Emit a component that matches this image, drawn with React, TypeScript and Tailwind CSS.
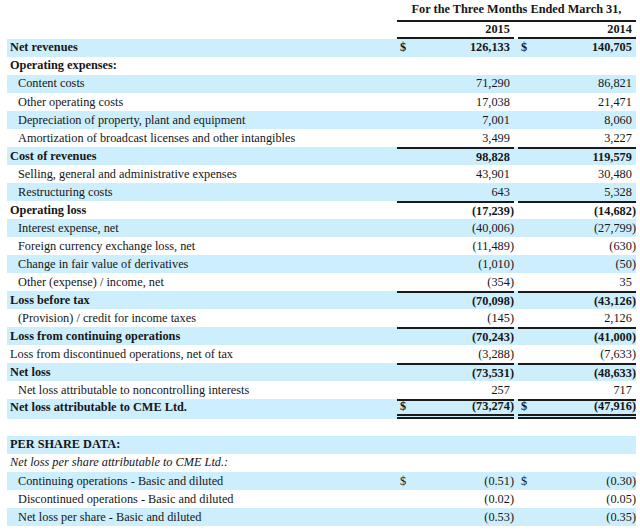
type Row = {
  label: string;
  a?: string;
  b?: string;
  dollar?: boolean;
  bold?: boolean;
  indent?: boolean;
  italic?: boolean;
  lineTop?: boolean;
  doubleBottom?: boolean;
  h?: string;
};

const rows: Row[] = [
  { label: "Net revenues", a: "126,133", b: "140,705", dollar: true, bold: true },
  { label: "Operating expenses:", bold: true },
  { label: "Content costs", a: "71,290", b: "86,821", indent: true },
  { label: "Other operating costs", a: "17,038", b: "21,471", indent: true },
  { label: "Depreciation of property, plant and equipment", a: "7,001", b: "8,060", indent: true },
  { label: "Amortization of broadcast licenses and other intangibles", a: "3,499", b: "3,227", indent: true },
  { label: "Cost of revenues", a: "98,828", b: "119,579", bold: true, lineTop: true },
  { label: "Selling, general and administrative expenses", a: "43,901", b: "30,480", indent: true },
  { label: "Restructuring costs", a: "643", b: "5,328", indent: true },
  { label: "Operating loss", a: "(17,239)", b: "(14,682)", bold: true, lineTop: true },
  { label: "Interest expense, net", a: "(40,006)", b: "(27,799)", indent: true },
  { label: "Foreign currency exchange loss, net", a: "(11,489)", b: "(630)", indent: true },
  { label: "Change in fair value of derivatives", a: "(1,010)", b: "(50)", indent: true },
  { label: "Other (expense) / income, net", a: "(354)", b: "35", indent: true },
  { label: "Loss before tax", a: "(70,098)", b: "(43,126)", bold: true, lineTop: true },
  { label: "(Provision) / credit for income taxes", a: "(145)", b: "2,126", indent: true },
  { label: "Loss from continuing operations", a: "(70,243)", b: "(41,000)", bold: true, lineTop: true },
  { label: "Loss from discontinued operations, net of tax", a: "(3,288)", b: "(7,633)" },
  { label: "Net loss", a: "(73,531)", b: "(48,633)", bold: true, lineTop: true },
  { label: "Net loss attributable to noncontrolling interests", a: "257", b: "717", indent: true },
  { label: "Net loss attributable to CME Ltd.", a: "(73,274)", b: "(47,916)", dollar: true, bold: true, lineTop: true, doubleBottom: true, h: "h-[20px]" },
  { label: "", h: "h-[16.1px]" },
  { label: "PER SHARE DATA:", bold: true },
  { label: "Net loss per share attributable to CME Ltd.:", italic: true },
  { label: "Continuing operations - Basic and diluted", a: "(0.51)", b: "(0.30)", dollar: true, indent: true },
  { label: "Discontinued operations - Basic and diluted", a: "(0.02)", b: "(0.05)", indent: true },
  { label: "Net loss per share - Basic and diluted", a: "(0.53)", b: "(0.35)", indent: true },
];

function Num({ v }: { v: string }) {
  const neg = v.endsWith(")");
  return (
    <span>
      {v}
      {!neg && <span className="invisible">)</span>}
    </span>
  );
}

function Cell({ row, v, w }: { row: Row; v?: string; w: string }) {
  const lines = [
    row.lineTop ? "border-t-2 border-[#1a1a1a]" : "",
    row.doubleBottom ? "border-b-[5px] border-double border-b-[#1a1a1a] items-start leading-[11px]" : "items-center",
  ].join(" ");
  return (
    <div className={`${w} h-full flex justify-between pl-[3px] ${lines}`}>
      <span>{row.dollar ? "$" : ""}</span>
      {v && <Num v={v} />}
    </div>
  );
}

export default function App() {
  return (
    <div className="w-[640px] h-[532px] bg-white pl-[7px] pr-[4px] font-['Liberation_Serif',serif] text-[12.3px] text-[#161616] leading-none">
      <div className="flex h-[22px]">
        <div className="flex-1" />
        <div className="w-[239px] border-b-2 border-[#1a1a1a] flex items-center justify-center font-bold pb-[1px]">
          For the Three Months Ended March 31,
        </div>
      </div>
      <div className="flex h-[16.5px] gap-[4px] font-bold">
        <div className="flex-1" />
        <div className="w-[117px] border-b-2 border-[#1a1a1a] flex items-center justify-end">
          <Num v="2015" />
        </div>
        <div className="w-[118px] border-b-2 border-[#1a1a1a] flex items-center justify-end">
          <Num v="2014" />
        </div>
      </div>
      {rows.map((r, i) => (
        <div
          key={i}
          className={`flex ${r.h ?? "h-[18.05px]"} gap-[4px] ${i % 2 === 0 ? "bg-[#cdeefd]" : "bg-white"} ${r.bold ? "font-bold" : ""}`}
        >
          <div
            className={`flex-1 flex items-center ${r.indent ? "pl-[11px]" : "pl-[3px]"} ${r.italic ? "italic" : ""} ${r.doubleBottom ? "pb-[5px]" : ""}`}
          >
            {r.label}
          </div>
          {r.a !== undefined ? (
            <>
              <Cell row={r} v={r.a} w="w-[117px]" />
              <Cell row={r} v={r.b} w="w-[118px]" />
            </>
          ) : (
            <>
              <div className="w-[117px]" />
              <div className="w-[118px]" />
            </>
          )}
        </div>
      ))}
    </div>
  );
}
